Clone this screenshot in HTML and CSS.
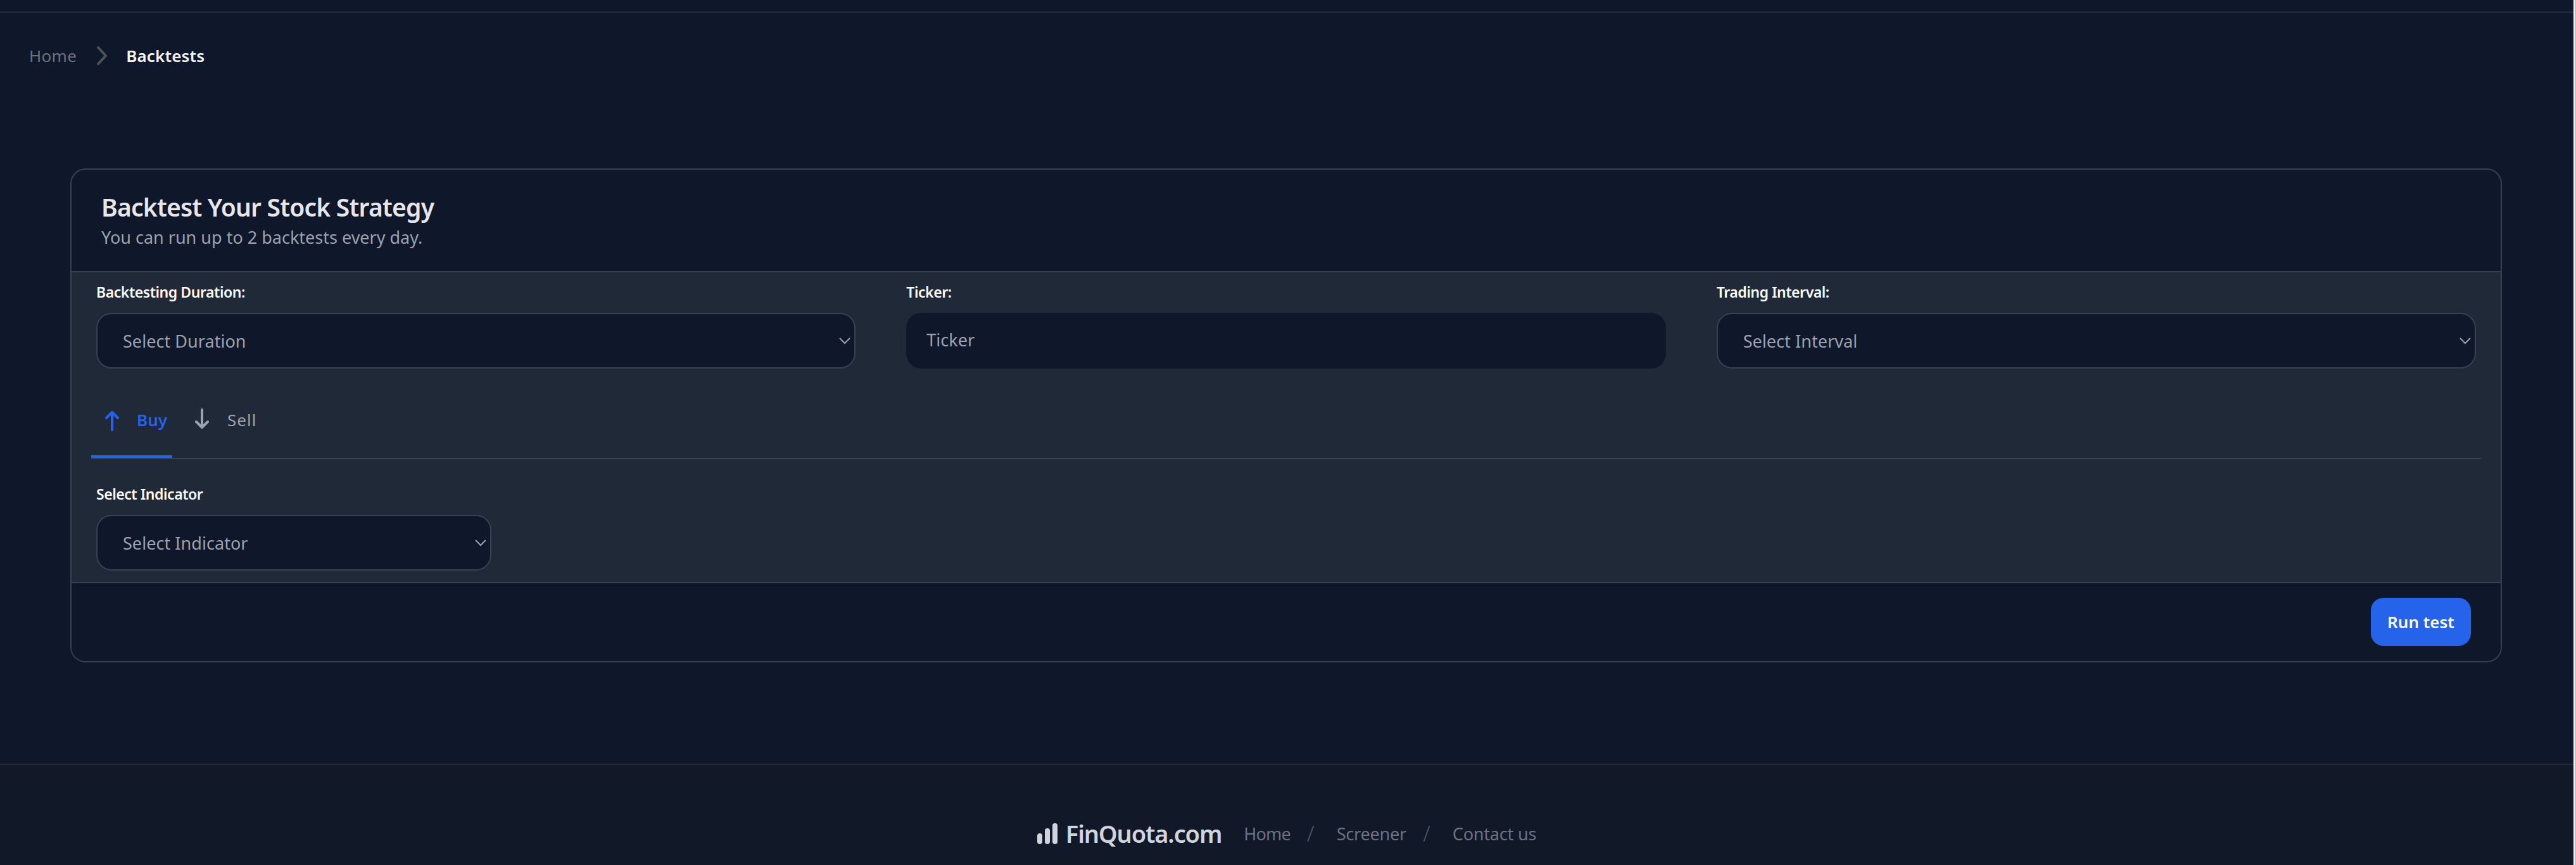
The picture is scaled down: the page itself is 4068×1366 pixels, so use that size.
FILE: index.html
```html
<!DOCTYPE html>
<html lang="en">
<head>
<meta charset="utf-8">
<title>Backtests</title>
<link rel="stylesheet" href="styles.css">
</head>
<body>
<div class="topbar"></div>
<nav class="crumbs">
  <a class="crumb">Home</a>
  <svg class="crumb-sep" viewBox="0 0 18 30"><path d="M3 2l12 13L3 28"/></svg>
  <span class="crumb-current">Backtests</span>
</nav>
<main class="main">
  <section class="card">
    <header class="card-head">
      <h1 class="title">Backtest Your Stock Strategy</h1>
      <p class="sub">You can run up to 2 backtests every day.</p>
    </header>
    <div class="card-body">
      <div class="fields">
        <div class="field">
          <label class="label">Backtesting Duration:</label>
          <div class="select">Select Duration<svg class="chev" viewBox="0 0 18 11"><path d="M1 1l8 8 8-8"/></svg></div>
        </div>
        <div class="field">
          <label class="label">Ticker:</label>
          <div class="input">Ticker</div>
        </div>
        <div class="field">
          <label class="label">Trading Interval:</label>
          <div class="select">Select Interval<svg class="chev" viewBox="0 0 18 11"><path d="M1 1l8 8 8-8"/></svg></div>
        </div>
      </div>
      <div class="tabs">
        <div class="tab tab-active">
          <svg class="arrow arrow-up" viewBox="0 0 24 32"><path d="M12 30V2M3 11l9-9 9 9"/></svg>
          <span>Buy</span>
        </div>
        <div class="tab tab-idle">
          <svg class="arrow arrow-down" viewBox="0 0 24 32"><path d="M12 2v28M3 21l9 9 9-9"/></svg>
          <span>Sell</span>
        </div>
      </div>
      <div class="field indicator">
        <label class="label">Select Indicator</label>
        <div class="select">Select Indicator<svg class="chev" viewBox="0 0 18 11"><path d="M1 1l8 8 8-8"/></svg></div>
      </div>
    </div>
    <footer class="card-foot">
      <button class="run">Run test</button>
    </footer>
  </section>
</main>
<footer class="footer">
  <div class="brand">
    <svg class="bars" viewBox="0 0 32 33"><rect x="0" y="16" width="8" height="17" rx="4"/><rect x="12" y="8" width="8" height="25" rx="4"/><rect x="24" y="0" width="8" height="33" rx="4"/></svg>
    <span class="brand-name">FinQuota.com</span>
  </div>
  <a class="foot-link foot-home">Home</a>
  <span class="foot-sep">/</span>
  <a class="foot-link">Screener</a>
  <span class="foot-sep">/</span>
  <a class="foot-link">Contact us</a>
</footer>
</body>
</html>
```
FILE: styles.css
```css
* { box-sizing: border-box; }
html { margin: 0; height: 1366px; overflow: hidden; background: #0f172a; border-right: 2px solid #c4c4c4; }
body {
  margin: 0;
  height: 1366px;
  overflow: hidden;
  background: #0f172a;
  font-family: "Noto Sans", sans-serif;
  display: flex;
  flex-direction: column;
  border-right: 2px solid #f3f3f3;
}
.topbar { height: 21px; border-bottom: 3px solid #1f2937; flex: none; }
.crumbs {
  display: flex;
  align-items: flex-start;
  height: 134px;
  padding: 48px 0 0 46px;
  flex: none;
}
.crumb { font-size: 26px; line-height: 38px; color: #6b7280; letter-spacing: 0.3px; }
.crumb-sep { width: 18px; height: 30px; margin: 4px 29px 0 31px; fill: none; stroke: #525252; stroke-width: 4; stroke-linecap: round; stroke-linejoin: round; }
.crumb-current { font-size: 26px; line-height: 38px; font-weight: 600; color: #f3f4f6; letter-spacing: 0.15px; }
.main { padding: 111px 113px 0 111px; flex: none; }
.card {
  border: 2px solid #374151;
  border-radius: 24px;
  overflow: hidden;
  height: 780px;
  display: flex;
  flex-direction: column;
}
.card-head { height: 162px; padding: 33px 47px 0; border-bottom: 2px solid #374151; flex: none; }
.title { margin: 0; font-size: 39px; line-height: 52px; font-weight: 600; color: #e5e7eb; letter-spacing: -0.78px; }
.sub { margin: 3px 0 0; font-size: 27px; line-height: 38px; color: #9ca3af; letter-spacing: 0; }
.card-body { background: #1f2937; height: 489px; padding: 16px 31px 0; flex: none; }
.fields { display: grid; grid-template-columns: repeat(3, 1fr); gap: 80px; padding: 0 8px; }
.field { display: flex; flex-direction: column; }
.label { font-size: 23px; line-height: 30px; font-weight: 600; color: #fff; letter-spacing: -0.45px; margin-bottom: 18px; }
.select, .input {
  height: 88px;
  border-radius: 24px;
  background: #0f172a;
  font-size: 27px;
  color: #9ca3af;
  display: flex;
  align-items: center;
  position: relative;
}
.select { border: 2px solid #374151; padding: 0 0 0 40px; letter-spacing: 0.05px; }
.input { padding: 0 0 3px 32px; letter-spacing: 0; }
.chev { position: absolute; right: 6px; top: 37px; width: 18px; height: 11px; fill: none; stroke: #9ca3af; stroke-width: 2; }
.tabs { display: flex; height: 143px; border-bottom: 2px solid #374151; }
.tab { display: flex; align-items: center; height: 141px; padding-top: 20px; font-size: 26px; color: #9ca3af; }
.tab-active { gap: 27px; padding-left: 21px; color: #2563eb; font-weight: 600; width: 128px; position: relative; }
.tab-active::after { content: ""; position: absolute; left: 0; right: 0; bottom: 0; height: 4px; background: #2563eb; }
.tab-idle { gap: 28px; letter-spacing: 1px; }
.arrow { width: 24px; height: 32px; fill: none; stroke: #2563eb; stroke-width: 4; stroke-linecap: round; stroke-linejoin: round; flex: none; }
.arrow-up { margin-top: 4px; }
.arrow-down { stroke: #9ca3af; margin: 0 0 3px 35px; }
.indicator { width: 624px; margin: 40px 0 0 8px; }
.card-foot { flex: 1; display: flex; justify-content: flex-end; align-items: flex-start; border-top: 2px solid #374151; padding: 23px 47px 0 0; background: #0f172a; }
.run { width: 158px; height: 76px; border: 0; border-radius: 20px; background: #2563eb; color: #fff; font-family: inherit; font-size: 26px; font-weight: 600; }
.footer {
  margin-top: 160px;
  flex: 1;
  background: #111827;
  border-top: 2px solid #1f2937;
  display: flex;
  align-items: center;
  justify-content: center;
  padding-top: 58px;
}
.brand { display: flex; align-items: center; gap: 13px; margin-right: 35px; }
.bars { width: 32px; height: 33px; fill: #d1d5db; }
.brand-name { font-size: 38px; font-weight: 600; color: #d1d5db; letter-spacing: -1.15px; }
.foot-link { font-size: 27px; color: #6b7280; letter-spacing: -0.2px; }
.foot-home { letter-spacing: -0.8px; }
.foot-sep { font-size: 34px; font-weight: 300; color: #4b5563; margin: 0 35px 0 26px; }
```
